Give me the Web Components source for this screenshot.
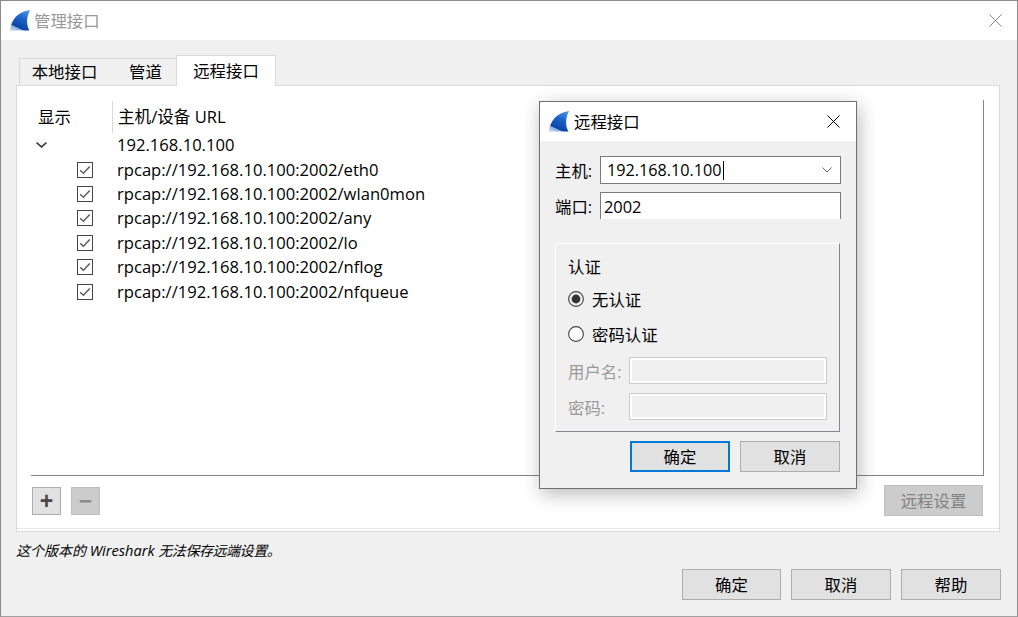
<!DOCTYPE html>
<html lang="zh">
<head>
<meta charset="utf-8">
<title>管理接口</title>
<style>
  html, body { margin: 0; padding: 0; background: #f0f0f0; }
  body { font: 16.4px "Open Sans", "Noto Sans CJK SC", sans-serif; color: #000; overflow: hidden; }
</style>
</head>
<body>
<if-window>
  <if-titlebar slot="title" inactive>管理接口</if-titlebar>
  <if-tabs>
    <if-tab>本地接口</if-tab>
    <if-tab plain>管道</if-tab>
    <if-tab active>远程接口</if-tab>
  </if-tabs>
  <if-pane>
    <if-tree>
      <if-row expander>192.168.10.100</if-row>
      <if-row checked>rpcap://192.168.10.100:2002/eth0</if-row>
      <if-row checked>rpcap://192.168.10.100:2002/wlan0mon</if-row>
      <if-row checked>rpcap://192.168.10.100:2002/any</if-row>
      <if-row checked>rpcap://192.168.10.100:2002/lo</if-row>
      <if-row checked>rpcap://192.168.10.100:2002/nflog</if-row>
      <if-row checked>rpcap://192.168.10.100:2002/nfqueue</if-row>
    </if-tree>
    <if-toolbar>
      <if-button kind="tool" style="margin-left:1px">+</if-button>
      <if-button kind="tool" disabled>−</if-button>
      <if-button disabled style="margin-left:auto;margin-right:1px;width:99px">远程设置</if-button>
    </if-toolbar>
  </if-pane>
  <if-note>这个版本的 <span style="font-size:14.6px">Wireshark</span> <span style="letter-spacing:-.45px">无法保存远端设置。</span></if-note>
  <if-actions>
    <if-button style="width:99px">确定</if-button>
    <if-button>取消</if-button>
    <if-button>帮助</if-button>
  </if-actions>
  <if-dialog>
    <if-titlebar>远程接口</if-titlebar>
    <if-form></if-form>
  </if-dialog>
</if-window>

<script>
// small helper, every element has the same constructor boilerplate
function shadow(el, html) {
  el.attachShadow({ mode: 'open' });
  el.shadowRoot.innerHTML = html;
}

class IfWindow extends HTMLElement {
  connectedCallback() {
    shadow(this, `
      <style>
        :host {
          display: flex;
          flex-direction: column;
          position: relative;
          box-sizing: border-box;
          width: 1018px;
          height: 617px;
          border: 1px solid #8c8c8c;
          border-bottom-color: #a0a0a0;
          background: #f0f0f0;
        }
        .content {
          display: flex;
          flex-direction: column;
          flex: 1;
          padding: 15px 17px 0 15px;
        }
      </style>
      <slot name="title"></slot>
      <div class="content"><slot></slot></div>
    `);
  }
}

class IfTitlebar extends HTMLElement {
  connectedCallback() {
    const inactive = this.hasAttribute('inactive');
    shadow(this, `
      <style>
        :host {
          display: flex;
          align-items: center;
          flex: none;
          height: 39px;
          background: #fff;
          color: ${inactive ? '#999' : '#000'};
        }
        svg.fin { margin-left: 9px; margin-right: ${inactive ? 4 : 5}px; flex: none; }
        .t { margin-top: -2px; }
        svg.close { margin-left: auto; margin-right: ${inactive ? 15 : 16}px; flex: none; }
      </style>
      <svg class="fin" width="20" height="21" viewBox="0 0 20 21">
        <defs>
          <linearGradient id="g" x1="0.75" y1="0" x2="0.3" y2="1">
            <stop offset="0" stop-color="#4a94e6"/>
            <stop offset="0.4" stop-color="#1a62c8"/>
            <stop offset="0.84" stop-color="#0b45a6"/>
            <stop offset="0.87" stop-color="#7fa8dc"/>
            <stop offset="1" stop-color="#b4cdec"/>
          </linearGradient>
        </defs>
        <path d="M0 20.5C1 10 7.5 2 20 0C17 6 15.5 14 19.5 20.5Z" fill="url(#g)"/>
      </svg>
      <span class="t"><slot></slot></span>
      <svg class="close" width="13" height="13" viewBox="0 0 13 13" fill="none"
           stroke="${inactive ? '#8a8a8a' : '#000'}" stroke-width="1">
        <path d="M0.5 0.5L12.5 12.5M12.5 0.5L0.5 12.5"/>
      </svg>
    `);
  }
}

class IfTabs extends HTMLElement {
  connectedCallback() {
    shadow(this, `
      <style>
        :host { display: flex; align-items: flex-end; flex: none; height: 30px; padding-left: 3px; }
      </style>
      <slot></slot>
    `);
  }
}

class IfTab extends HTMLElement {
  connectedCallback() {
    const on = this.hasAttribute('active');
    const plain = this.hasAttribute('plain');
    shadow(this, `
      <style>
        :host {
          display: flex;
          align-items: center;
          justify-content: center;
          box-sizing: border-box;
          height: ${on ? 31 : 28}px;
          width: ${on ? 100 : plain ? 67 : 90}px;
          padding-left: ${plain ? 6 : 0}px;
          margin-bottom: -1px;
          position: relative;
          z-index: ${on ? 2 : 0};
          border-top: 1px solid #d9d9d9;
          border-bottom: ${on ? 'none' : '1px solid #d9d9d9'};
          border-left: ${on ? '1px solid #d9d9d9' : 'none'};
          border-right: ${on ? '1px solid #d9d9d9' : 'none'};
          background: ${on ? '#fff' : '#f0f0f0'};
          line-height: 1;
        }
        :host(:first-child) { border-left: 1px solid #d9d9d9; }
      </style>
      <slot></slot>
    `);
  }
}

class IfPane extends HTMLElement {
  connectedCallback() {
    shadow(this, `
      <style>
        :host {
          display: flex;
          flex-direction: column;
          flex: none;
          box-sizing: border-box;
          height: 447px;
          background: #fff;
          border: 1px solid #d9d9d9;
          padding: 14px 15px 0 14px;
          position: relative;
        }
        .rule {
          position: absolute;
          left: 0; right: 0; bottom: 2px;
          height: 1px;
          background: #e8e8e8;
        }
      </style>
      <slot></slot>
      <div class="rule"></div>
    `);
  }
}

class IfTree extends HTMLElement {
  connectedCallback() {
    shadow(this, `
      <style>
        :host {
          display: block;
          box-sizing: border-box;
          height: 376px;
          padding-top: 1px;
          border-right: 1px solid #85858c;
          border-bottom: 1px solid #85858c;
          flex: none;
          font-size: 16.6px;
        }
        .head {
          display: grid;
          grid-template-columns: 81px 1fr;
          height: 32px;
          align-items: center;
        }
        .head div { line-height: 32px; }
        .show { padding-left: 7px; font-size: 16.4px; }
        .host { border-left: 1px solid #d9d9d9; padding-left: 5px; margin-top: -1px; }
      </style>
      <div class="head">
        <div class="show">显示</div>
        <div class="host">主机/设备 URL</div>
      </div>
      <slot></slot>
    `);
  }
}

class IfRow extends HTMLElement {
  connectedCallback() {
    const mark = this.hasAttribute('expander')
      ? `<svg class="chev" width="11" height="6" viewBox="0 0 11 6" fill="none" stroke="#444" stroke-width="1.7"><path d="M0.6 0.6L5.5 5L10.4 0.6"/></svg>`
      : `<if-checkbox></if-checkbox>`;
    shadow(this, `
      <style>
        :host {
          display: grid;
          grid-template-columns: 86px 1fr;
          height: 24.4px;
          align-items: center;
          line-height: 24px;
          white-space: nowrap;
        }
        .mark { display: flex; align-items: center; height: 100%; }
        .chev { margin-left: 5px; }
        if-checkbox { margin-left: 46px; }
      </style>
      <div class="mark">${mark}</div>
      <div><slot></slot></div>
    `);
  }
}

class IfCheckbox extends HTMLElement {
  connectedCallback() {
    shadow(this, `
      <style>:host { display: block; width: 16px; height: 16px; }</style>
      <svg width="16" height="16" viewBox="0 0 16 16" fill="none" style="display:block">
        <rect x="0.5" y="0.5" width="15" height="15" fill="#fff" stroke="#444"/>
        <path d="M3.2 8.2L6.4 11.2L12.8 4.6" stroke="#5c5c5c" stroke-width="1.5"/>
      </svg>
    `);
  }
}

class IfToolbar extends HTMLElement {
  connectedCallback() {
    shadow(this, `
      <style>
        :host { display: flex; align-items: flex-start; gap: 10px; padding-top: 9px; }
      </style>
      <slot></slot>
    `);
  }
}

class IfButton extends HTMLElement {
  connectedCallback() {
    const tool = this.getAttribute('kind') === 'tool';
    const off = this.hasAttribute('disabled');
    const def = this.hasAttribute('default');
    shadow(this, `
      <style>
        :host {
          display: flex;
          align-items: center;
          justify-content: center;
          flex: none;
          box-sizing: border-box;
          width: ${tool ? 29 : 100}px;
          height: ${tool ? 28 : 31}px;
          margin-top: ${tool ? 2 : 0}px;
          padding-top: ${tool ? 0 : 2}px;
          border: ${def ? '2px solid #0078d7' : '1px solid ' + (off ? '#bfbfbf' : '#adadad')};
          background: ${off ? '#cccccc' : '#e1e1e1'};
          color: ${tool ? (off ? '#8b8b8b' : '#484848') : off ? '#838383' : '#000'};
          font-family: ${tool ? '"Liberation Sans", sans-serif' : 'inherit'};
          font-weight: ${tool ? 700 : 400};
          font-size: ${tool ? 23 : 16.4}px;
          line-height: 1;
        }
      </style>
      <slot></slot>
    `);
  }
}

class IfNote extends HTMLElement {
  connectedCallback() {
    shadow(this, `
      <style>
        :host {
          display: block;
          flex: none;
          height: 37px;
          line-height: 37px;
          font-size: 14px;
          font-style: italic;
          white-space: nowrap;
        }
      </style>
      <slot></slot>
    `);
  }
}

class IfActions extends HTMLElement {
  connectedCallback() {
    shadow(this, `
      <style>
        :host { display: flex; justify-content: flex-end; gap: 10px; flex: none; margin-right: -1px; }
      </style>
      <slot></slot>
    `);
  }
}

// floats over the main window, so it is placed absolutely
class IfDialog extends HTMLElement {
  connectedCallback() {
    shadow(this, `
      <style>
        :host {
          display: flex;
          flex-direction: column;
          position: absolute;
          left: 538px;
          top: 100px;
          box-sizing: border-box;
          width: 318px;
          height: 388px;
          background: #f0f0f0;
          border: 1px solid #6f6f6f;
          box-shadow: 2px 5px 18px rgba(0,0,0,.28);
          z-index: 5;
        }
      </style>
      <slot></slot>
    `);
  }
}

class IfField extends HTMLElement {
  connectedCallback() {
    shadow(this, `
      <style>
        :host {
          display: grid;
          grid-template-columns: 45px 241px;
          align-items: center;
          white-space: nowrap;
        }
        :host([sub]) { grid-template-columns: 61px 198px; color: #9a9a9a; }
      </style>
      <span><slot name="label"></slot></span>
      <slot></slot>
    `);
  }
}

class IfCombo extends HTMLElement {
  connectedCallback() {
    shadow(this, `
      <style>
        :host {
          display: flex;
          align-items: center;
          box-sizing: border-box;
          height: 28px;
          background: #fff;
          border: 1px solid #7a7a7a;
          padding-left: 6px;
          font-size: 16.2px;
        }
        .caret { width: 1px; height: 19px; background: #000; margin-left: 1px; }
        svg { margin-left: auto; margin-right: 8px; }
      </style>
      <slot></slot><span class="caret"></span>
      <svg width="10" height="6" viewBox="0 0 10 6" fill="none" stroke="#666"><path d="M0.5 0.5L5 5L9.5 0.5"/></svg>
    `);
  }
}

class IfInput extends HTMLElement {
  connectedCallback() {
    shadow(this, `
      <style>
        :host {
          display: flex;
          align-items: center;
          box-sizing: border-box;
          height: 27px;
          background: #fff;
          border: 1px solid #7a7a7a;
          border-bottom: none;
          padding-left: 3px;
        }
        :host([disabled]) {
          background: #f0f0f0;
          border: 1px solid #cccccc;
          box-shadow: inset 0 0 0 2px #fff;
        }
      </style>
      <slot></slot>
    `);
  }
}

class IfRadio extends HTMLElement {
  connectedCallback() {
    const on = this.hasAttribute('checked');
    shadow(this, `
      <style>
        :host { display: flex; align-items: center; gap: 8px; height: 24px; white-space: nowrap; }
      </style>
      <svg width="16" height="16" viewBox="0 0 16 16" style="flex:none">
        <circle cx="8" cy="8" r="7.4" fill="${on ? '#f0f0f0' : '#fff'}" stroke="#444" stroke-width="1.1"/>
        ${on ? '<circle cx="8" cy="8" r="4.4" fill="#333"/>' : ''}
      </svg>
      <slot></slot>
    `);
  }
}

class IfGroup extends HTMLElement {
  connectedCallback() {
    shadow(this, `
      <style>
        :host {
          display: flex;
          flex-direction: column;
          box-sizing: border-box;
          width: 285px;
          height: 189px;
          border: 1px solid #fff;
          border-right-color: #85858c;
          border-bottom-color: #85858c;
          padding: 11px 12px 0 12px;
        }
        .t { line-height: 24px; height: 24px; margin-bottom: 8px; }
      </style>
      <div class="t">认证</div>
      <slot></slot>
    `);
  }
}

class IfForm extends HTMLElement {
  connectedCallback() {
    shadow(this, `
      <style>
        :host {
          display: flex;
          flex-direction: column;
          flex: 1;
          padding: 15px 0 0 15px;
        }
        .port { margin-top: 8px; margin-bottom: 24px; }
        .btns { display: flex; gap: 10px; justify-content: flex-end; margin-top: 9px; width: 285px; }
        if-radio + if-radio { margin-top: 11px; }
        .u { margin-top: 11px; }
        .p { margin-top: 9px; }
      </style>
      <if-field><span slot="label">主机:</span><if-combo>192.168.10.100</if-combo></if-field>
      <if-field class="port"><span slot="label">端口:</span><if-input>2002</if-input></if-field>
      <if-group>
        <if-radio checked>无认证</if-radio>
        <if-radio>密码认证</if-radio>
        <if-field sub class="u"><span slot="label">用户名:</span><if-input disabled></if-input></if-field>
        <if-field sub class="p"><span slot="label">密码:</span><if-input disabled></if-input></if-field>
      </if-group>
      <div class="btns"><if-button default>确定</if-button><if-button>取消</if-button></div>
    `);
  }
}

customElements.define('if-window', IfWindow);
customElements.define('if-titlebar', IfTitlebar);
customElements.define('if-tabs', IfTabs);
customElements.define('if-tab', IfTab);
customElements.define('if-pane', IfPane);
customElements.define('if-tree', IfTree);
customElements.define('if-row', IfRow);
customElements.define('if-checkbox', IfCheckbox);
customElements.define('if-toolbar', IfToolbar);
customElements.define('if-button', IfButton);
customElements.define('if-note', IfNote);
customElements.define('if-actions', IfActions);
customElements.define('if-dialog', IfDialog);
customElements.define('if-field', IfField);
customElements.define('if-combo', IfCombo);
customElements.define('if-input', IfInput);
customElements.define('if-radio', IfRadio);
customElements.define('if-group', IfGroup);
customElements.define('if-form', IfForm);
</script>
</body>
</html>
